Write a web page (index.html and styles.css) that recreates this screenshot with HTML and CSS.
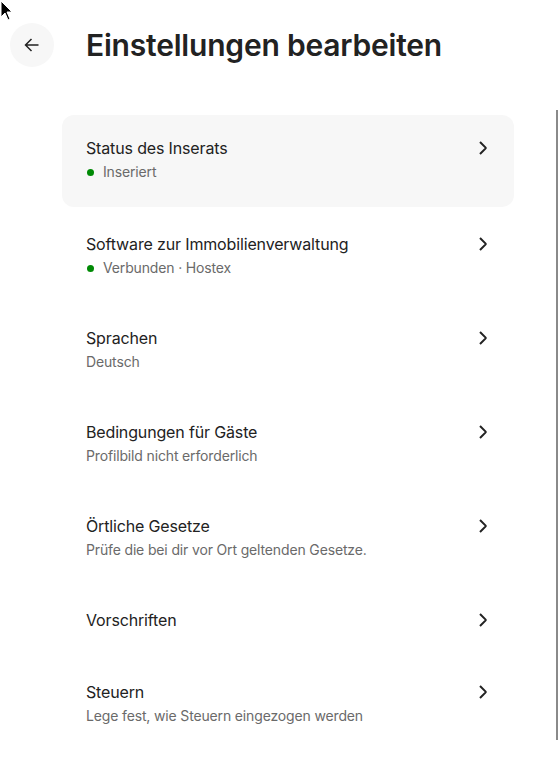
FILE: index.html
```html
<!DOCTYPE html>
<html lang="de">
<head>
    <meta charset="UTF-8">
    <meta name="viewport" content="width=device-width, initial-scale=1.0">
    <title>Einstellungen bearbeiten</title>
    <link rel="stylesheet" href="styles.css">
</head>
<body>
    <svg class="cursor" width="14" height="22" viewBox="0 0 14 22">
        <path d="M1 1 L1 17 L5 13 L8 20 L10 19 L7 12 L12 12 Z" fill="#000" stroke="#fff" stroke-width="1"/>
    </svg>

    <header class="page-header">
        <button class="back" aria-label="Zurück">
            <svg width="16" height="16" viewBox="0 0 32 32" fill="none" stroke="#222" stroke-width="3">
                <path d="M29 16H3M15 4 3 16l12 12"/>
            </svg>
        </button>
        <h1>Einstellungen bearbeiten</h1>
    </header>

    <div class="settings">
        <a class="setting active" href="#">
            <div class="setting-text">
                <div class="setting-title">Status des Inserats</div>
                <div class="setting-sub"><span class="dot"></span>Inseriert</div>
            </div>
            <svg class="chevron" viewBox="0 0 32 32"><path d="m12 4 11.3 11.3a1 1 0 0 1 0 1.4L12 28"/></svg>
        </a>
        <a class="setting" href="#">
            <div class="setting-text">
                <div class="setting-title">Software zur Immobilienverwaltung</div>
                <div class="setting-sub"><span class="dot"></span>Verbunden · Hostex</div>
            </div>
            <svg class="chevron" viewBox="0 0 32 32"><path d="m12 4 11.3 11.3a1 1 0 0 1 0 1.4L12 28"/></svg>
        </a>
        <a class="setting" href="#">
            <div class="setting-text">
                <div class="setting-title">Sprachen</div>
                <div class="setting-sub">Deutsch</div>
            </div>
            <svg class="chevron" viewBox="0 0 32 32"><path d="m12 4 11.3 11.3a1 1 0 0 1 0 1.4L12 28"/></svg>
        </a>
        <a class="setting" href="#">
            <div class="setting-text">
                <div class="setting-title">Bedingungen für Gäste</div>
                <div class="setting-sub">Profilbild nicht erforderlich</div>
            </div>
            <svg class="chevron" viewBox="0 0 32 32"><path d="m12 4 11.3 11.3a1 1 0 0 1 0 1.4L12 28"/></svg>
        </a>
        <a class="setting" href="#">
            <div class="setting-text">
                <div class="setting-title">Örtliche Gesetze</div>
                <div class="setting-sub">Prüfe die bei dir vor Ort geltenden Gesetze.</div>
            </div>
            <svg class="chevron" viewBox="0 0 32 32"><path d="m12 4 11.3 11.3a1 1 0 0 1 0 1.4L12 28"/></svg>
        </a>
        <a class="setting" href="#">
            <div class="setting-text">
                <div class="setting-title">Vorschriften</div>
            </div>
            <svg class="chevron" viewBox="0 0 32 32"><path d="m12 4 11.3 11.3a1 1 0 0 1 0 1.4L12 28"/></svg>
        </a>
        <a class="setting" href="#">
            <div class="setting-text">
                <div class="setting-title">Steuern</div>
                <div class="setting-sub">Lege fest, wie Steuern eingezogen werden</div>
            </div>
            <svg class="chevron" viewBox="0 0 32 32"><path d="m12 4 11.3 11.3a1 1 0 0 1 0 1.4L12 28"/></svg>
        </a>
    </div>

    <div class="scroll-edge"></div>
</body>
</html>
```

FILE: styles.css
```css
body {
    margin: 0;
    background: #fff;
    color: #222;
    font-family: Inter, "Noto Sans", sans-serif;
    position: relative;
    min-height: 759px;
    overflow: hidden;
}

.cursor {
    position: absolute;
    top: 0;
    left: 0;
}

.page-header {
    display: flex;
    align-items: center;
    gap: 32px;
    padding: 23px 0 0 10px;
}

.back {
    width: 44px;
    height: 44px;
    border-radius: 50%;
    border: none;
    background: #f7f7f7;
    display: flex;
    align-items: center;
    justify-content: center;
    padding: 0;
    cursor: pointer;
}

.page-header h1 {
    margin: 0;
    font-size: 30px;
    font-weight: 600;
    letter-spacing: -0.2px;
    line-height: 44px;
}

.settings {
    display: flex;
    flex-direction: column;
    gap: 2px;
    margin: 48px 45px 0 62px;
}

.setting {
    display: flex;
    align-items: flex-start;
    justify-content: space-between;
    padding: 21px 24px 25px 24px;
    border-radius: 12px;
    color: inherit;
    text-decoration: none;
}

.setting.active {
    background: #f7f7f7;
    margin-bottom: 2px;
}

.setting-title {
    font-size: 16px;
    line-height: 24px;
    letter-spacing: -0.15px;
}

.setting-sub {
    margin-top: 2px;
    font-size: 14px;
    line-height: 20px;
    letter-spacing: -0.15px;
    color: #6a6a6a;
    display: flex;
    align-items: center;
}

.dot {
    width: 7px;
    height: 7px;
    border-radius: 50%;
    background: #008a05;
    margin: 0 9px 0 1px;
}

.chevron {
    width: 16px;
    height: 16px;
    margin-top: 4px;
    fill: none;
    stroke: #222;
    stroke-width: 4;
}

.scroll-edge {
    position: absolute;
    top: 110px;
    right: 1px;
    width: 2px;
    height: 630px;
    background: #8a8a8a;
}
```
